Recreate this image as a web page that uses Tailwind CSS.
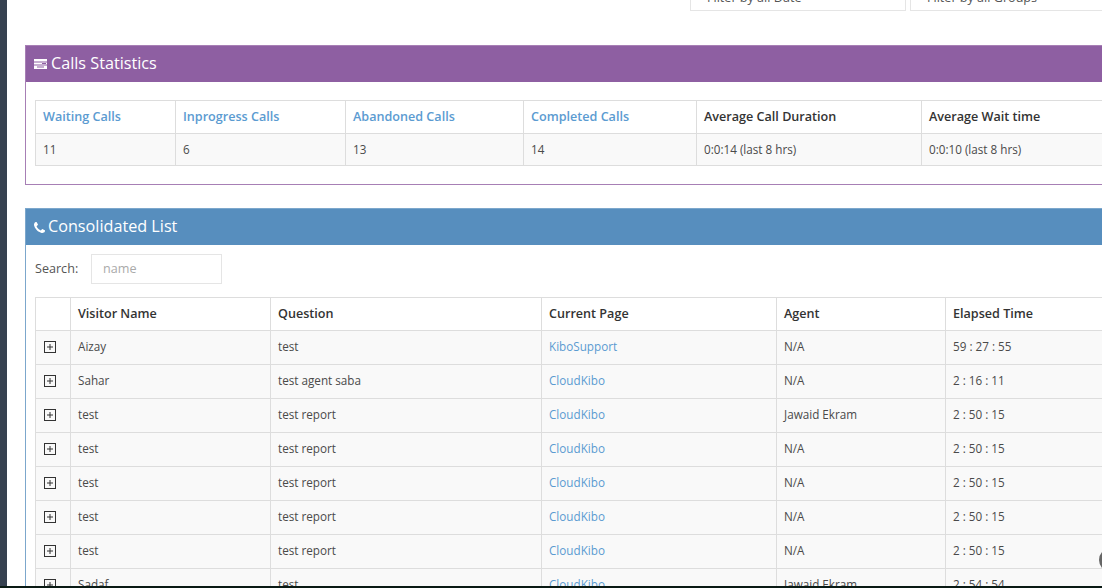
<!DOCTYPE html>
<html lang="en">
<head>
  <meta charset="UTF-8" />
  <meta name="viewport" content="width=device-width, initial-scale=1.0" />
  <title>Calls Statistics</title>
  <script src="https://cdn.jsdelivr.net/npm/@tailwindcss/browser@4"></script>
</head>
<body class="bg-white">
<div class="relative flex h-[588px] w-[1102px] overflow-hidden font-['Open_Sans',sans-serif] text-[12.6px] text-[#4a4a4a]">

  <!-- Sidebar edge -->
  <div class="w-[7px] shrink-0 bg-[#364150]"></div>

  <div class="w-[1300px] shrink-0 pl-[18px]">

    <!-- Filters, scrolled mostly out of view -->
    <div class="mt-[-24px] flex h-[35px] gap-[4px] pl-[665px] text-[#555]">
      <div class="flex h-[35px] w-[216px] items-center border border-[#e5e5e5] pl-[16px] pt-[10px]">Filter by all Date</div>
      <div class="flex h-[35px] w-[216px] items-center border border-[#e5e5e5] pl-[16px] pt-[10px]">Filter by all Groups</div>
    </div>

    <!-- Calls Statistics -->
    <section class="mt-[34px] h-[140px] border border-[#a77fb5]">
      <h2 class="flex h-[36px] items-center gap-[4px] bg-[#8e5fa2] pb-[2px] pl-[8px] text-[16.2px] text-white">
        <svg class="mt-[2px] h-[10px] w-[13px]" viewBox="0 0 13 10" fill="#fff"><rect width="13" height="2.5"/><rect y="3.5" width="13" height="2"/><rect y="6.5" width="13" height="3.5"/><rect x="8" y="4" width="4" height="1" fill="#8e5fa2"/><rect x="3" y="7.5" width="7" height="1" fill="#8e5fa2"/></svg>
        Calls Statistics
      </h2>
      <table class="ml-[9px] mt-[18px] w-[1200px] table-fixed border-collapse">
        <colgroup>
          <col class="w-[140px]" /><col class="w-[170px]" /><col class="w-[178px]" /><col class="w-[173px]" /><col class="w-[225px]" /><col />
        </colgroup>
        <tbody>
          <tr class="h-[33px] font-semibold text-[#333]">
            <td class="border border-[#ddd] px-[7px] text-[#5b9bd1]">Waiting Calls</td>
            <td class="border border-[#ddd] px-[7px] text-[#5b9bd1]">Inprogress Calls</td>
            <td class="border border-[#ddd] px-[7px] text-[#5b9bd1]">Abandoned Calls</td>
            <td class="border border-[#ddd] px-[7px] text-[#5b9bd1]">Completed Calls</td>
            <td class="border border-[#ddd] px-[7px]">Average Call Duration</td>
            <td class="border border-[#ddd] px-[7px]">Average Wait time</td>
          </tr>
          <tr class="h-[32px] bg-[#f9f9f9] text-[11.7px]">
            <td class="border border-[#ddd] px-[7px]">11</td>
            <td class="border border-[#ddd] px-[7px]">6</td>
            <td class="border border-[#ddd] px-[7px]">13</td>
            <td class="border border-[#ddd] px-[7px]">14</td>
            <td class="border border-[#ddd] px-[7px]">0:0:14 (last 8 hrs)</td>
            <td class="border border-[#ddd] px-[7px]">0:0:10 (last 8 hrs)</td>
          </tr>
        </tbody>
      </table>
    </section>

    <!-- Consolidated List -->
    <section class="mt-[23px] border border-[#7ca7cc]">
      <h2 class="flex h-[36px] items-center gap-[3px] bg-[#578ebe] pb-[2px] pl-[8px] text-[16.2px] text-white">
        <svg class="mt-[2px] h-[11px] w-[11px]" viewBox="0 0 1408 1408" fill="#fff"><path d="M1408 1112q0 27-10 70.5t-21 68.5q-21 50-122 106-94 51-186 51-27 0-53-3.5t-57.5-12.5-47-14.5-55.5-20.5-49-18q-98-35-175-83-127-79-264-216t-216-264q-48-77-83-175-3-9-18-49t-20.5-55.5-14.5-47-12.5-57.5-3.5-53q0-92 51-186 56-101 106-122 25-11 68.5-21t70.5-10q14 0 21 3 18 6 53 76 11 19 30 54t35 63.5 31 53.5q3 4 17.5 25t21.5 35.5 7 28.5q0 20-28.5 50t-62 55-62 53-28.5 46q0 9 5 22.5t8.5 20.5 14 24 11.5 19q76 137 174 235t235 174q2 1 19 11.5t24 14 20.5 8.5 22.5 5q18 0 46-28.5t53-62 55-62 50-28.5q14 0 28.5 7t35.5 21.5 25 17.5q25 15 53.5 31t63.5 35 54 30q70 35 76 53 3 7 3 21z"/></svg>
        Consolidated List
      </h2>
      <div class="mt-[9px] flex h-[30px] items-center pl-[9px]">
        <label class="w-[56px] text-[#555]">Search:</label>
        <input class="h-[30px] w-[131px] border border-[#e5e5e5] px-[11px] pb-[2px] placeholder:text-[#aaa]" placeholder="name" />
      </div>
      <table class="ml-[9px] mt-[13px] w-[1200px] table-fixed border-collapse">
        <colgroup>
          <col class="w-[35px]" /><col class="w-[200px]" /><col class="w-[271px]" /><col class="w-[235px]" /><col class="w-[169px]" /><col />
        </colgroup>
        <thead class="text-[#333]">
          <tr class="h-[33px]">
            <th class="border border-[#ddd]"></th>
            <th class="border border-[#ddd] px-[7px] text-left font-semibold">Visitor Name</th>
            <th class="border border-[#ddd] px-[7px] text-left font-semibold">Question</th>
            <th class="border border-[#ddd] px-[7px] text-left font-semibold">Current Page</th>
            <th class="border border-[#ddd] px-[7px] text-left font-semibold">Agent</th>
            <th class="border border-[#ddd] px-[7px] text-left font-semibold">Elapsed Time</th>
          </tr>
        </thead>
        <tbody class="text-[11.7px]">
          <tr class="h-[34px] bg-[#f9f9f9]">
            <td class="border border-[#ddd] pb-[2px] pl-[8px]"><svg class="h-[12px] w-[12px]" viewBox="0 0 12 12" fill="none" stroke="#333"><rect x=".5" y=".5" width="11" height="11"/><path d="M3 6h6M6 3v6"/></svg></td>
            <td class="border border-[#ddd] px-[7px] pb-[2px]">Aizay</td>
            <td class="border border-[#ddd] px-[7px] pb-[2px]">test</td>
            <td class="border border-[#ddd] px-[7px] pb-[2px] text-[#5b9bd1]">KiboSupport</td>
            <td class="border border-[#ddd] px-[7px] pb-[2px]">N/A</td>
            <td class="border border-[#ddd] px-[7px] pb-[2px]">59 : 27 : 55</td>
          </tr>
          <tr class="h-[34px] bg-[#f9f9f9]">
            <td class="border border-[#ddd] pb-[2px] pl-[8px]"><svg class="h-[12px] w-[12px]" viewBox="0 0 12 12" fill="none" stroke="#333"><rect x=".5" y=".5" width="11" height="11"/><path d="M3 6h6M6 3v6"/></svg></td>
            <td class="border border-[#ddd] px-[7px] pb-[2px]">Sahar</td>
            <td class="border border-[#ddd] px-[7px] pb-[2px]">test agent saba</td>
            <td class="border border-[#ddd] px-[7px] pb-[2px] text-[#5b9bd1]">CloudKibo</td>
            <td class="border border-[#ddd] px-[7px] pb-[2px]">N/A</td>
            <td class="border border-[#ddd] px-[7px] pb-[2px]">2 : 16 : 11</td>
          </tr>
          <tr class="h-[34px] bg-[#f9f9f9]">
            <td class="border border-[#ddd] pb-[2px] pl-[8px]"><svg class="h-[12px] w-[12px]" viewBox="0 0 12 12" fill="none" stroke="#333"><rect x=".5" y=".5" width="11" height="11"/><path d="M3 6h6M6 3v6"/></svg></td>
            <td class="border border-[#ddd] px-[7px] pb-[2px]">test</td>
            <td class="border border-[#ddd] px-[7px] pb-[2px]">test report</td>
            <td class="border border-[#ddd] px-[7px] pb-[2px] text-[#5b9bd1]">CloudKibo</td>
            <td class="border border-[#ddd] px-[7px] pb-[2px]">Jawaid Ekram</td>
            <td class="border border-[#ddd] px-[7px] pb-[2px]">2 : 50 : 15</td>
          </tr>
          <tr class="h-[34px] bg-[#f9f9f9]">
            <td class="border border-[#ddd] pb-[2px] pl-[8px]"><svg class="h-[12px] w-[12px]" viewBox="0 0 12 12" fill="none" stroke="#333"><rect x=".5" y=".5" width="11" height="11"/><path d="M3 6h6M6 3v6"/></svg></td>
            <td class="border border-[#ddd] px-[7px] pb-[2px]">test</td>
            <td class="border border-[#ddd] px-[7px] pb-[2px]">test report</td>
            <td class="border border-[#ddd] px-[7px] pb-[2px] text-[#5b9bd1]">CloudKibo</td>
            <td class="border border-[#ddd] px-[7px] pb-[2px]">N/A</td>
            <td class="border border-[#ddd] px-[7px] pb-[2px]">2 : 50 : 15</td>
          </tr>
          <tr class="h-[34px] bg-[#f9f9f9]">
            <td class="border border-[#ddd] pb-[2px] pl-[8px]"><svg class="h-[12px] w-[12px]" viewBox="0 0 12 12" fill="none" stroke="#333"><rect x=".5" y=".5" width="11" height="11"/><path d="M3 6h6M6 3v6"/></svg></td>
            <td class="border border-[#ddd] px-[7px] pb-[2px]">test</td>
            <td class="border border-[#ddd] px-[7px] pb-[2px]">test report</td>
            <td class="border border-[#ddd] px-[7px] pb-[2px] text-[#5b9bd1]">CloudKibo</td>
            <td class="border border-[#ddd] px-[7px] pb-[2px]">N/A</td>
            <td class="border border-[#ddd] px-[7px] pb-[2px]">2 : 50 : 15</td>
          </tr>
          <tr class="h-[34px] bg-[#f9f9f9]">
            <td class="border border-[#ddd] pb-[2px] pl-[8px]"><svg class="h-[12px] w-[12px]" viewBox="0 0 12 12" fill="none" stroke="#333"><rect x=".5" y=".5" width="11" height="11"/><path d="M3 6h6M6 3v6"/></svg></td>
            <td class="border border-[#ddd] px-[7px] pb-[2px]">test</td>
            <td class="border border-[#ddd] px-[7px] pb-[2px]">test report</td>
            <td class="border border-[#ddd] px-[7px] pb-[2px] text-[#5b9bd1]">CloudKibo</td>
            <td class="border border-[#ddd] px-[7px] pb-[2px]">N/A</td>
            <td class="border border-[#ddd] px-[7px] pb-[2px]">2 : 50 : 15</td>
          </tr>
          <tr class="h-[34px] bg-[#f9f9f9]">
            <td class="border border-[#ddd] pb-[2px] pl-[8px]"><svg class="h-[12px] w-[12px]" viewBox="0 0 12 12" fill="none" stroke="#333"><rect x=".5" y=".5" width="11" height="11"/><path d="M3 6h6M6 3v6"/></svg></td>
            <td class="border border-[#ddd] px-[7px] pb-[2px]">test</td>
            <td class="border border-[#ddd] px-[7px] pb-[2px]">test report</td>
            <td class="border border-[#ddd] px-[7px] pb-[2px] text-[#5b9bd1]">CloudKibo</td>
            <td class="border border-[#ddd] px-[7px] pb-[2px]">N/A</td>
            <td class="border border-[#ddd] px-[7px] pb-[2px]">2 : 50 : 15</td>
          </tr>
          <tr class="h-[34px] bg-[#f9f9f9]">
            <td class="border border-[#ddd] pb-[2px] pl-[8px]"><svg class="h-[12px] w-[12px]" viewBox="0 0 12 12" fill="none" stroke="#333"><rect x=".5" y=".5" width="11" height="11"/><path d="M3 6h6M6 3v6"/></svg></td>
            <td class="border border-[#ddd] px-[7px] pb-[2px]">Sadaf</td>
            <td class="border border-[#ddd] px-[7px] pb-[2px]">test</td>
            <td class="border border-[#ddd] px-[7px] pb-[2px] text-[#5b9bd1]">CloudKibo</td>
            <td class="border border-[#ddd] px-[7px] pb-[2px]">Jawaid Ekram</td>
            <td class="border border-[#ddd] px-[7px] pb-[2px]">2 : 54 : 54</td>
          </tr>
        </tbody>
      </table>
    </section>
  </div>

  <!-- Floating chat circle, cut off at the right edge -->
  <div class="absolute left-[1099px] top-[548px] h-[24px] w-[24px] rounded-full border-[3px] border-[#666]"></div>

  <!-- Window edge -->
  <div class="absolute bottom-0 left-0 h-[2px] w-full bg-[#0a1a14]"></div>
</div>
</body>
</html>
